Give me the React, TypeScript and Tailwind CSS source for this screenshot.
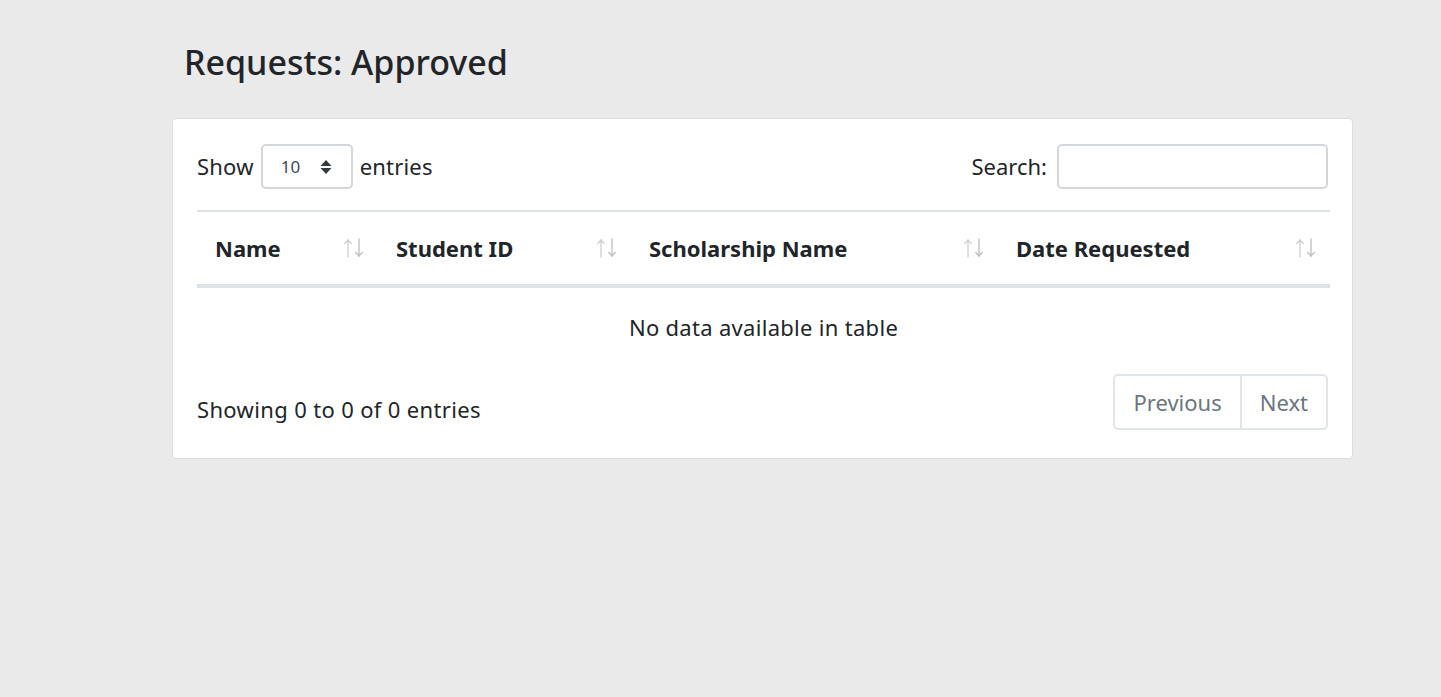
import React from "react";

const font = { fontFamily: '"Noto Sans", "Open Sans", sans-serif' };

function SortArrows() {
  return (
    <svg width="22" height="20" viewBox="0 0 22 20" className="shrink-0">
      <g stroke="#cfcfcf" strokeWidth="1.3" fill="none" strokeLinecap="round">
        <path d="M5 19 V2" />
        <path d="M1.8 5.5 L5 2 L8.2 5.5" />
      </g>
      <g stroke="#bdbdbd" strokeWidth="1.3" fill="none" strokeLinecap="round">
        <path d="M16 1 V18" />
        <path d="M12.8 14.5 L16 18 L19.2 14.5" />
      </g>
    </svg>
  );
}

export default function App() {
  const cols = [
    { label: "Name", w: "w-[181px]" },
    { label: "Student ID", w: "w-[253px]" },
    { label: "Scholarship Name", w: "w-[367px]" },
    { label: "Date Requested", w: "flex-1" },
  ];
  return (
    <div className="min-h-[697px] bg-[#eaeaea] text-[#212529]" style={font}>
      <div className="pl-[172px] pr-[88px] pt-[38px]">
        <h1 className="pl-[12px] text-[34px] font-medium leading-[48px]">Requests: Approved</h1>
        <div className="mt-[32px] rounded-[4px] border border-[#dcdde0] bg-white px-[24px] pb-[28px] pt-[25px]">
          <div className="flex items-center justify-between">
            <div className="flex items-center gap-[7px] text-[22px] tracking-[0.2px]">
              <span>Show</span>
              <div className="flex h-[45px] w-[92px] items-center justify-between rounded-[5px] border-2 border-[#d3d7dc] pl-[18px] pr-[19px]">
                <span className="text-[17px] text-[#3d4a57]">10</span>
                <svg width="12" height="16" viewBox="0 0 12 16">
                  <path d="M6 1 L11.5 7 H0.5 Z" fill="#343a40" />
                  <path d="M6 15 L11.5 9 H0.5 Z" fill="#343a40" />
                </svg>
              </div>
              <span>entries</span>
            </div>
            <div className="flex items-center gap-[10px] text-[22px]">
              <span>Search:</span>
              <div className="h-[45px] w-[271px] rounded-[5px] border-2 border-[#d3d7dc]" />
            </div>
          </div>
          <div className="-mr-[2px] mt-[21px] border-t-2 border-[#dee2e6]">
            <div className="flex h-[76px] items-center border-b-4 border-[#dee2e6] text-[22px] font-bold">
              {cols.map((c) => (
                <div key={c.label} className={`${c.w} flex items-center justify-between pl-[18px] pr-[13px]`}>
                  <span>{c.label}</span>
                  <SortArrows />
                </div>
              ))}
            </div>
            <div className="flex h-[78px] items-center justify-center text-[22px] tracking-[0.3px]">
              No data available in table
            </div>
          </div>
          <div className="mt-[8px] flex items-end justify-between">
            <div className="pb-[4px] text-[22px] tracking-[0.35px]">Showing 0 to 0 of 0 entries</div>
            <div className="flex h-[56px] overflow-hidden rounded-[5px] border-2 border-[#e1e4e8] text-[22px] text-[#6c757d]">
              <div className="flex items-center border-r-2 border-[#e1e4e8] px-[18px]">Previous</div>
              <div className="flex items-center px-[18px]">Next</div>
            </div>
          </div>
        </div>
      </div>
    </div>
  );
}
